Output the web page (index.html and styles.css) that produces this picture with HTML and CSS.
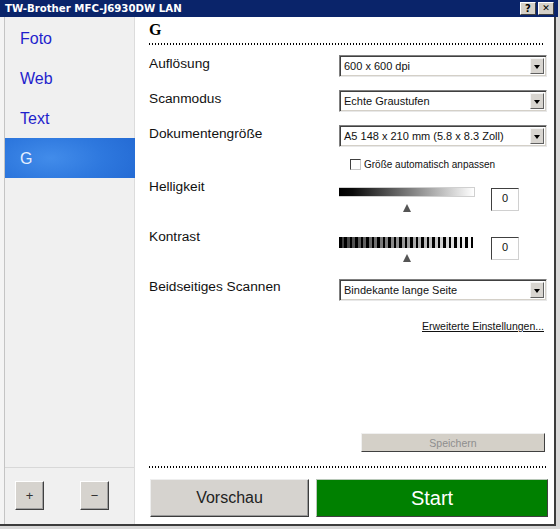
FILE: index.html
```html
<!DOCTYPE html>
<html lang="de">
<head>
<meta charset="utf-8">
<title>TW-Brother MFC-J6930DW LAN</title>
<link rel="stylesheet" href="styles.css">
</head>
<body>
<div class="titlebar">
  <span class="title">TW-Brother MFC-J6930DW LAN</span>
  <div class="tb-btns"><span class="tb-btn">?</span><span class="tb-btn tb-close">&#x2715;</span></div>
</div>
<div class="frame">
  <aside class="sidebar">
    <ul class="modes">
      <li class="mode">Foto</li>
      <li class="mode">Web</li>
      <li class="mode">Text</li>
      <li class="mode active">G</li>
    </ul>
    <div class="side-foot">
      <button class="sq-btn">+</button>
      <button class="sq-btn">&minus;</button>
    </div>
  </aside>
  <main class="content">
    <h1 class="heading">G</h1>
    <div class="dots"></div>

    <div class="row r1">
      <div class="label">Auflösung</div>
      <div class="select"><span class="sel-text">600 x 600 dpi</span><span class="sel-arrow"></span></div>
    </div>
    <div class="row r2">
      <div class="label">Scanmodus</div>
      <div class="select"><span class="sel-text">Echte Graustufen</span><span class="sel-arrow"></span></div>
    </div>
    <div class="row r3">
      <div class="label">Dokumentengröße</div>
      <div class="select"><span class="sel-text">A5 148 x 210 mm (5.8 x 8.3 Zoll)</span><span class="sel-arrow"></span></div>
    </div>
    <div class="row check-row">
      <div></div>
      <label class="check"><span class="checkbox"></span><span class="check-text">Größe automatisch anpassen</span></label>
    </div>
    <div class="row slider-row bright">
      <div class="label">Helligkeit</div>
      <div class="slider-ctl">
        <div class="slider"><div class="bar bar-bright"></div><div class="thumb"></div></div>
        <div class="value">0</div>
      </div>
    </div>
    <div class="row slider-row contrast">
      <div class="label">Kontrast</div>
      <div class="slider-ctl">
        <div class="slider"><div class="bar bar-contrast"></div><div class="thumb"></div></div>
        <div class="value">0</div>
      </div>
    </div>
    <div class="row r-duplex">
      <div class="label">Beidseitiges Scannen</div>
      <div class="select"><span class="sel-text">Bindekante lange Seite</span><span class="sel-arrow"></span></div>
    </div>
    <div class="adv"><span class="adv-link">Erweiterte Einstellungen...</span></div>

    <div class="save-row"><button class="save">Speichern</button></div>
    <div class="dots dots-bottom"></div>
    <div class="actions">
      <button class="preview">Vorschau</button>
      <button class="start">Start</button>
    </div>
  </main>
</div>
</body>
</html>
```

FILE: styles.css
```css
* { box-sizing: border-box; }
html, body { margin: 0; padding: 0; }
body {
  width: 560px;
  height: 529px;
  overflow: hidden;
  background: #d8d8d8;
  font-family: "Liberation Sans", Arial, sans-serif;
  color: #111;
}

/* title bar */
.titlebar {
  width: 558px;
  height: 17px;
  background: #0a246a;
  display: flex;
  align-items: center;
  justify-content: space-between;
  padding: 0 4px 0 5px;
}
.title {
  font-family: "DejaVu Sans", Verdana, sans-serif;
  font-weight: bold;
  font-size: 10.2px;
  color: #fff;
  white-space: nowrap;
}
.tb-btns { display: flex; gap: 2px; }
.tb-btn {
  width: 16px;
  height: 13px;
  background: #d4d0c8;
  border-top: 1px solid #fff;
  border-left: 1px solid #fff;
  border-right: 1px solid #404040;
  border-bottom: 1px solid #404040;
  font-family: "DejaVu Sans", sans-serif;
  font-weight: bold;
  font-size: 10px;
  line-height: 11px;
  text-align: center;
  color: #000;
}
.tb-close { font-size: 9px; }

/* frame */
.frame {
  width: 556px;
  height: 509px;
  display: flex;
  padding-left: 4px;
  background: #f4f4f4;
  border-right: 2px solid #3c3c3c;
  border-bottom: 2px solid #3c3c3c;
}

/* sidebar */
.sidebar {
  width: 132px;
  background: #f0f0f0;
  border-left: 1px solid #c4c4c4;
  border-right: 1px solid #dcdcdc;
  display: flex;
  flex-direction: column;
  padding-top: 1px;
}
.modes { list-style: none; margin: 0; padding: 0; }
.mode {
  height: 40px;
  line-height: 40px;
  padding: 1px 0 0 15px;
  font-size: 16px;
  color: #1f1fcc;
}
.mode.active {
  margin-right: -1px;
  color: #e4efff;
  background: radial-gradient(ellipse 80% 120% at 35% 50%, #428cea 0%, #2e78de 50%, #2268d2 100%);
}
.side-foot {
  margin-top: auto;
  height: 57px;
  border-top: 1px solid #d8d8d8;
  display: flex;
  padding: 13px 0 0 10px;
  gap: 36px;
  align-items: flex-start;
}
.sq-btn {
  width: 29px;
  height: 29px;
  padding: 0;
  background: #d6d3ce;
  border-top: 1px solid #fff;
  border-left: 1px solid #fff;
  border-right: 1px solid #404040;
  border-bottom: 1px solid #404040;
  box-shadow: inset -1px -1px 0 #a0a0a0;
  font-family: "Liberation Sans", Arial, sans-serif;
  font-size: 13px;
  color: #333;
}

/* content */
.content {
  flex: 1;
  background: #fff;
  display: flex;
  flex-direction: column;
  padding: 0 6px 0 14px;
}
.heading {
  margin: 3px 0 0;
  font-family: "Liberation Serif", "Times New Roman", serif;
  font-weight: bold;
  font-size: 16px;
  line-height: 20px;
  color: #000;
}
.dots {
  margin-top: 3px;
  margin-right: 5px;
  height: 2px;
  background: repeating-linear-gradient(90deg, #000 0 1px, transparent 1px 3px);
}
.dots-bottom { margin-top: 14px; margin-right: 1px; }

.row {
  display: grid;
  grid-template-columns: 190px 208px;
  align-items: start;
}
.label {
  font-size: 13.7px;
  line-height: 16px;
  padding-top: 1px;
  color: #111;
  white-space: nowrap;
}
.r1 { margin-top: 10px; }
.r2, .r3 { margin-top: 13px; }

.select {
  height: 22px;
  display: flex;
  align-items: center;
  background: #fff;
  border-top: 1px solid #808080;
  border-left: 1px solid #808080;
  border-right: 1px solid #e8e8e8;
  border-bottom: 1px solid #e8e8e8;
  box-shadow: inset 1px 1px 0 #404040, inset -1px -1px 0 #d4d0c8;
  padding: 2px 2px 2px 4px;
}
.sel-text {
  flex: 1;
  font-size: 11px;
  color: #111;
  white-space: nowrap;
}
.sel-arrow {
  width: 14px;
  align-self: stretch;
  background: #d8d5d0;
  border-top: 1px solid #f4f4f4;
  border-left: 1px solid #f4f4f4;
  border-right: 1px solid #606060;
  border-bottom: 1px solid #606060;
  display: flex;
  align-items: center;
  justify-content: center;
}
.sel-arrow::before {
  content: "";
  border-left: 3.5px solid transparent;
  border-right: 3.5px solid transparent;
  border-top: 4px solid #000;
  margin-top: 1px;
}

.check-row { margin-top: 11px; }
.check {
  display: flex;
  align-items: center;
  gap: 3px;
  padding-left: 11px;
  height: 12px;
}
.checkbox {
  width: 11px;
  height: 11px;
  background: #fff;
  border-top: 1px solid #404040;
  border-left: 1px solid #404040;
  border-right: 1px solid #c8c8c8;
  border-bottom: 1px solid #c8c8c8;
}
.check-text { font-size: 10px; color: #111; white-space: nowrap; }

.bright { margin-top: 8px; }
.contrast { margin-top: 16px; }
.slider-ctl { display: flex; align-items: flex-start; }
.slider {
  width: 136px;
  padding-top: 9px;
  display: flex;
  flex-direction: column;
  align-items: center;
}
.bar { width: 136px; height: 10px; }
.bar-bright {
  background: linear-gradient(90deg, #000 0%, #0a0a0a 10%, #fff 100%);
  border: 1px solid #d0d0d0;
  border-left: none;
}
.bar-contrast {
  height: 11px;
  background:
    repeating-linear-gradient(90deg, #000 0 2.5px, transparent 2.5px 5.5px),
    linear-gradient(90deg, #3a3a3a 0%, #8a8a8a 40%, #fff 100%);
}
.thumb {
  margin-top: 7px;
  width: 0;
  height: 0;
  border-left: 4.5px solid transparent;
  border-right: 4.5px solid transparent;
  border-bottom: 8px solid #555;
}
.contrast .thumb { margin-top: 6px; }
.value {
  margin-left: 16px;
  margin-top: 10px;
  width: 28px;
  height: 23px;
  border-top: 1px solid #404040;
  border-left: 1px solid #404040;
  border-right: 1px solid #d0d0d0;
  border-bottom: 1px solid #d0d0d0;
  font-size: 11px;
  text-align: center;
  line-height: 19px;
  color: #111;
}
.contrast .value { margin-top: 9px; }

.r-duplex { margin-top: 16px; }
.r-duplex .select { margin-top: 1px; }

.adv {
  margin-top: 17px;
  text-align: right;
  padding-right: 4px;
  line-height: 13px;
}
.adv-link {
  font-size: 10.5px;
  color: #111;
  text-decoration: underline;
}

.save-row {
  margin-top: auto;
  display: flex;
  justify-content: flex-end;
  padding-right: 3px;
}
.save {
  width: 184px;
  height: 19px;
  padding: 0;
  background: #d4d0c8;
  border-top: 1px solid #f0f0f0;
  border-left: 1px solid #f0f0f0;
  border-right: 1px solid #404040;
  border-bottom: 1px solid #404040;
  font-family: "Liberation Sans", Arial, sans-serif;
  font-size: 10.5px;
  color: #8e8e8e;
}

.actions {
  margin-top: 11px;
  margin-bottom: 7px;
  display: flex;
  gap: 7px;
  padding-left: 1px;
}
.preview {
  width: 159px;
  height: 38px;
  padding: 0;
  background: #d6d3cf;
  border-top: 1px solid #eee;
  border-left: 1px solid #eee;
  border-right: 1px solid #3c3c3c;
  border-bottom: 1px solid #3c3c3c;
  box-shadow: inset -1px -1px 0 #9a9a9a;
  font-family: "Liberation Sans", Arial, sans-serif;
  font-size: 16px;
  color: #222;
}
.start {
  width: 232px;
  height: 38px;
  padding: 0;
  background: #008000;
  border-top: 1px solid #b8c8b8;
  border-left: 1px solid #b8c8b8;
  border-right: 1px solid #404040;
  border-bottom: 1px solid #404040;
  font-family: "Liberation Sans", Arial, sans-serif;
  font-size: 20px;
  color: #fff;
}
```
